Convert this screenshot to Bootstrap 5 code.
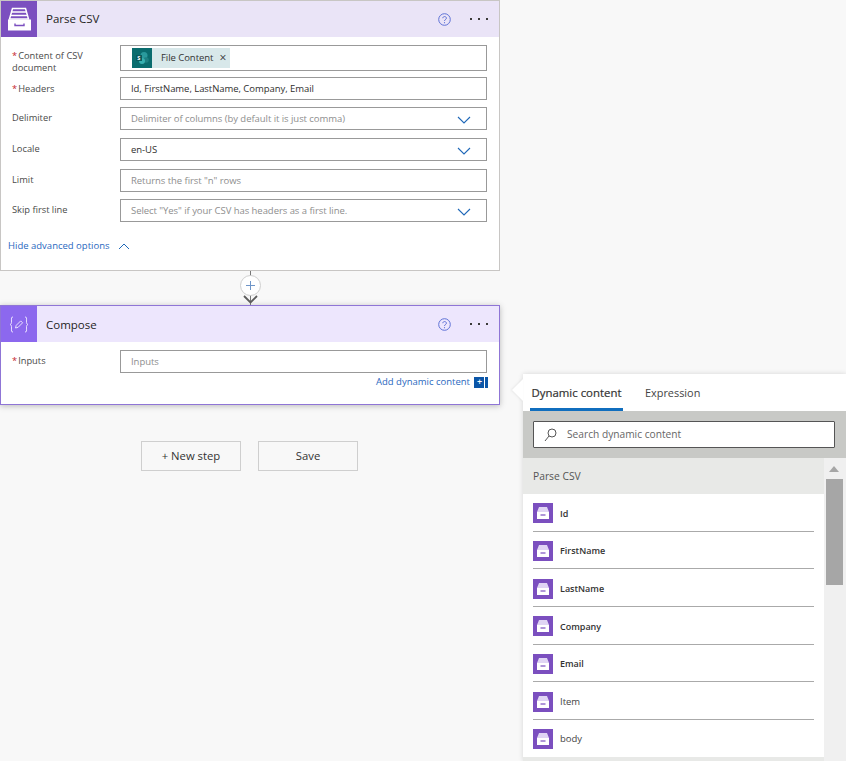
<!DOCTYPE html>
<html lang="en"><head><meta charset="utf-8"><title>Flow</title>
<link href="https://cdn.jsdelivr.net/npm/bootstrap@5.3.0/dist/css/bootstrap.min.css" rel="stylesheet">
<style>
html,body{height:761px;overflow:hidden}
body{background:#f8f8f8;font-family:"Open Sans","Noto Sans",sans-serif;font-size:9.5px;color:#323130;position:relative}
.flow-col{width:500px}
.step{background:#fff;border:1px solid #c8c6c4}
.step-one{height:271px}
.step-two{height:100px;border-color:#8f75d6;box-shadow:0 1px 6px rgba(0,0,0,.25)}
.step-head{height:36px;background:#eae4f7}
.step-two .step-head{background:#ede6fd}
.step-ico{width:36px;height:36px;background:#7b4fbf;flex:none}
.step-two .step-ico{background:#8c68ee}
.step-title{font-size:11.5px;margin-left:9px;color:#252423}
.step-two .step-title{padding-top:1px}
.help{width:13px;height:13px;margin-right:19px}
.dots{width:18px;margin-right:11px;display:flex;justify-content:space-between}
.dots i{width:2px;height:2px;background:#3b3a39;display:block}
.frow{padding-left:11px;padding-right:12px}
.tallrow{height:26px}
.flabel{width:108px;flex:none;line-height:11.5px;color:#4a4a49;font-size:9.3px;padding-top:5px}
.r2 .flabel{padding-top:6px}
.req{color:#c4262e;margin-right:1px}
.fbox{flex:1;border:1px solid #999;height:23px;padding:2px 0 0 10px;color:#2f2f2e;min-width:0;letter-spacing:-.05px}
.ph{color:#8e8e8e}
.chev{width:14px;height:8px;margin-right:15px}
.tall{height:26px;padding-top:0}
.tag{height:20px;background:#d8e8ea;margin-left:1px}
.tag-ico{width:20px;height:20px;background:#0a6c6e}
.tag-text{margin:0 6px 0 9px;color:#333}
.tag-x{font-size:12px;margin-right:4px;color:#333;line-height:1}
.adv{color:#2a68c0;padding-left:7px}
.r2{margin-top:6px}
.r3{margin-top:7px}
.r3+.r3{margin-top:8px}
.r3.rlast{margin-top:7px}
.advrow{margin-top:17px}
.connector{height:34px;width:500px}
.node{width:21px;height:21px;border:1px solid #cfcfcf;border-radius:50%;background:#fff;left:240px;top:4px}
.stem{left:250px;top:0;width:1px;height:34px;background:#777}
.arrow{left:243px;top:24px;width:15px;height:9px}
.addlink{color:#2a68c0;height:17px;padding-right:11px;margin-top:1px}
.addbtn{width:14px;height:11px;background:linear-gradient(90deg,#0b56a8 0 10px,#fff 10px 11px,#0b56a8 11px);color:#fff;font-size:9px;line-height:10px;margin-left:4px;padding-right:3px}
.addbtn b{font-weight:600}
.btns{margin-top:36px;margin-left:141px;gap:17px}
.fbtn{width:100px;height:30px;border:1px solid #cfcfcf;background:#f8f8f8;font-size:11.3px;color:#333;border-radius:0;padding:0}
.panel{position:absolute;left:523px;top:374px;width:323px;height:387px;background:#fff;box-shadow:0 0 5px rgba(0,0,0,.14)}
.notch{position:absolute;left:-11px;top:5px;width:0;height:0;border:solid transparent;border-width:11px 11px 11px 0;border-right-color:#fff;filter:drop-shadow(-1px 0 1px rgba(0,0,0,.08))}
.tabs{height:37px;padding-left:7px;font-size:11.4px}
.dtab{width:93px;height:37px;border-bottom:3px solid #106ebe;color:#333;text-align:center;padding-top:10px;-webkit-text-stroke:.2px #333}
.etab{margin-left:22px;padding-top:11px;color:#444;font-size:10.9px}
.sband{height:47px;background:#c8c9c6;padding:10px 11px 0 10px}
.sbox{height:27px;background:#fff;border:1px solid #555;border-radius:1px;color:#666;font-size:10.2px;padding-left:10px}
.sbox svg{width:13px;height:14px;margin-right:10px}
.lwrap{height:303px}
.lmain{width:301px}
.shead{height:36px;background:#e8e9e7;padding:2px 0 0 10px;font-size:10.3px;color:#555}
.oitem{height:37.7px;margin:0 10px;border-bottom:1px solid #aaa;font-weight:600;font-size:9px;color:#333;padding-top:2px}
.oitem:last-of-type{border-bottom:0}
.oitem.lite{font-weight:400;font-size:9.5px;color:#444}
.oico{width:20px;height:20px;background:#7b4fbf;margin-right:7px;flex:none}
.lfoot{height:4px;background:#e8e9e7;margin-top:-1px}
.sbar{width:22px;background:#f0f0f0;position:relative;height:303px}
.sup{position:absolute;left:5px;top:8px;border:solid transparent;border-width:0 5px 6px;border-bottom-color:#a6a6a6}
.sthumb{position:absolute;left:2px;top:21px;width:17px;height:106px;background:#a6a6a6}
</style></head>
<body>
<svg width="0" height="0" class="position-absolute"><defs>
<symbol id="drawer" viewBox="0 0 36 36">
<path d="M11.500 7.500h13l3 10.500h-19z" fill="none" stroke="#fff" stroke-width="1.5"/>
<path d="M11 11h14M10 14.500h16" stroke="#fff" stroke-width="1.5"/>
<path d="M7 18.500h23v11H7z" fill="#fff"/>
<path d="M14 22.500v2h9v-2" fill="none" stroke="#7b4fbf" stroke-width="1.4"/>
</symbol>
<symbol id="drawer2" viewBox="0 0 20 20">
<path d="M6 4h8l2 5H4z" fill="#e0d5f4"/>
<path d="M4 9h12v7H4z" fill="#fff"/>
<path d="M7.500 12h5" stroke="#7b4fbf" stroke-width="1.2"/>
</symbol>
<symbol id="qmark" viewBox="0 0 13 13">
<circle cx="6.500" cy="6.500" r="5.800" fill="none" stroke="#5f72d6" stroke-width="1"/>
<path d="M4.800 5.200c0-2.200 3.600-2.200 3.600 0 0 1.400-1.900 1.300-1.900 2.800" fill="none" stroke="#5f72d6"/>
<circle cx="6.500" cy="9.700" r=".6" fill="#5f72d6"/>
</symbol>
<symbol id="chevd" viewBox="0 0 14 8"><path d="M1 1l6 6 6-6" fill="none" stroke="#1f68b8" stroke-width="1.1"/></symbol>
</defs></svg>

<div class="flow-col">
  <section class="step step-one d-flex flex-column">
    <div class="step-head d-flex align-items-center">
      <div class="step-ico"><svg width="36" height="36"><use href="#drawer"/></svg></div>
      <div class="step-title flex-grow-1">Parse CSV</div>
      <svg class="help"><use href="#qmark"/></svg>
      <div class="dots"><i></i><i></i><i></i></div>
    </div>
    <div class="frow tallrow d-flex mt-2">
      <div class="flabel"><span class="req">*</span>Content of CSV document</div>
      <div class="fbox tall d-flex align-items-center"><div class="tag d-flex align-items-center"><div class="tag-ico d-flex align-items-center justify-content-center"><svg width="16" height="14" viewBox="0 0 16 14"><circle cx="10" cy="4.500" r="3.500" fill="#2a9a9c"/><circle cx="12" cy="9" r="2.800" fill="#1d8082"/><circle cx="8" cy="10" r="3" fill="#37b0b0"/><rect x="2" y="4" width="6" height="6" fill="#0a5a5c"/><text x="3.300" y="9" font-size="5.500" font-weight="700" fill="#fff">S</text></svg></div><span class="tag-text">File Content</span><span class="tag-x">×</span></div></div>
    </div>
    <div class="frow d-flex r2">
      <div class="flabel"><span class="req">*</span>Headers</div>
      <div class="fbox d-flex align-items-center">Id, FirstName, LastName, Company, Email</div>
    </div>
    <div class="frow d-flex r3">
      <div class="flabel">Delimiter</div>
      <div class="fbox d-flex align-items-center justify-content-between ph">Delimiter of columns (by default it is just comma)<svg class="chev"><use href="#chevd"/></svg></div>
    </div>
    <div class="frow d-flex r3">
      <div class="flabel">Locale</div>
      <div class="fbox d-flex align-items-center justify-content-between">en-US<svg class="chev"><use href="#chevd"/></svg></div>
    </div>
    <div class="frow d-flex r3">
      <div class="flabel">Limit</div>
      <div class="fbox d-flex align-items-center ph">Returns the first "n" rows</div>
    </div>
    <div class="frow d-flex r3 rlast">
      <div class="flabel">Skip first line</div>
      <div class="fbox d-flex align-items-center justify-content-between ph">Select "Yes" if your CSV has headers as a first line.<svg class="chev"><use href="#chevd"/></svg></div>
    </div>
    <div class="adv d-flex align-items-center advrow">Hide advanced options<svg width="12" height="7" viewBox="0 0 12 7" class="ms-2"><path d="M1 6l5-5 5 5" fill="none" stroke="#1f68b8"/></svg></div>
  </section>
  <div class="connector position-relative">
    <div class="stem position-absolute"></div>
    <div class="node position-absolute d-flex align-items-center justify-content-center"><svg width="11" height="11" viewBox="0 0 11 11"><path d="M5.500 1v9M1 5.500h9" stroke="#6f95c8"/></svg></div>
    <svg class="arrow position-absolute" viewBox="0 0 15 9"><path d="M1 1l6.500 6.500L14 1" fill="none" stroke="#5c5c5c" stroke-width="1.8"/></svg>
  </div>
  <section class="step step-two">
    <div class="step-head d-flex align-items-center">
      <div class="step-ico d-flex align-items-center justify-content-center"><svg width="20" height="17" viewBox="0 0 20 17"><path d="M4 1C2 1 2.500 2 2.500 5S2.500 7.500 1 8.500c1.500 1 1.500.5 1.500 3.500S2 16 4 16M16 1c2 0 1.500 1 1.500 4s0 2.500 1.500 3.500c-1.500 1-1.500.5-1.500 3.500s.5 4-1.500 4" fill="none" stroke="#f0eaff" stroke-width=".9"/><path d="M6.500 12l.7-2.600 4.500-4.500 1.900 1.900-4.500 4.500z" fill="none" stroke="#f0eaff" stroke-width=".9"/></svg></div>
      <div class="step-title flex-grow-1">Compose</div>
      <svg class="help"><use href="#qmark"/></svg>
      <div class="dots"><i></i><i></i><i></i></div>
    </div>
    <div class="frow d-flex mt-2">
      <div class="flabel"><span class="req">*</span>Inputs</div>
      <div class="fbox d-flex align-items-center ph">Inputs</div>
    </div>
    <div class="addlink d-flex align-items-center justify-content-end">Add dynamic content<span class="addbtn text-center"><b>+</b></span></div>
  </section>
  <div class="btns d-flex">
    <button class="btn fbtn" type="button">+ New step</button>
    <button class="btn fbtn" type="button">Save</button>
  </div>
</div>

<aside class="panel">
  <div class="notch"></div>
  <div class="tabs d-flex"><div class="dtab">Dynamic content</div><div class="etab">Expression</div></div>
  <div class="sband"><div class="sbox d-flex align-items-center"><svg viewBox="0 0 13 14"><circle cx="8" cy="5" r="4" fill="none" stroke="#555"/><path d="M5 8l-4 5" stroke="#555"/></svg>Search dynamic content</div></div>
  <div class="lwrap d-flex">
    <div class="lmain">
      <div class="shead d-flex align-items-center">Parse CSV</div>
      <div class="oitem d-flex align-items-center"><svg class="oico"><use href="#drawer2"/></svg>Id</div>
      <div class="oitem d-flex align-items-center"><svg class="oico"><use href="#drawer2"/></svg>FirstName</div>
      <div class="oitem d-flex align-items-center"><svg class="oico"><use href="#drawer2"/></svg>LastName</div>
      <div class="oitem d-flex align-items-center"><svg class="oico"><use href="#drawer2"/></svg>Company</div>
      <div class="oitem d-flex align-items-center"><svg class="oico"><use href="#drawer2"/></svg>Email</div>
      <div class="oitem lite d-flex align-items-center"><svg class="oico"><use href="#drawer2"/></svg>Item</div>
      <div class="oitem lite d-flex align-items-center"><svg class="oico"><use href="#drawer2"/></svg>body</div>
      <div class="lfoot"></div>
    </div>
    <div class="sbar"><div class="sup"></div><div class="sthumb"></div></div>
  </div>
</aside>
</body></html>
